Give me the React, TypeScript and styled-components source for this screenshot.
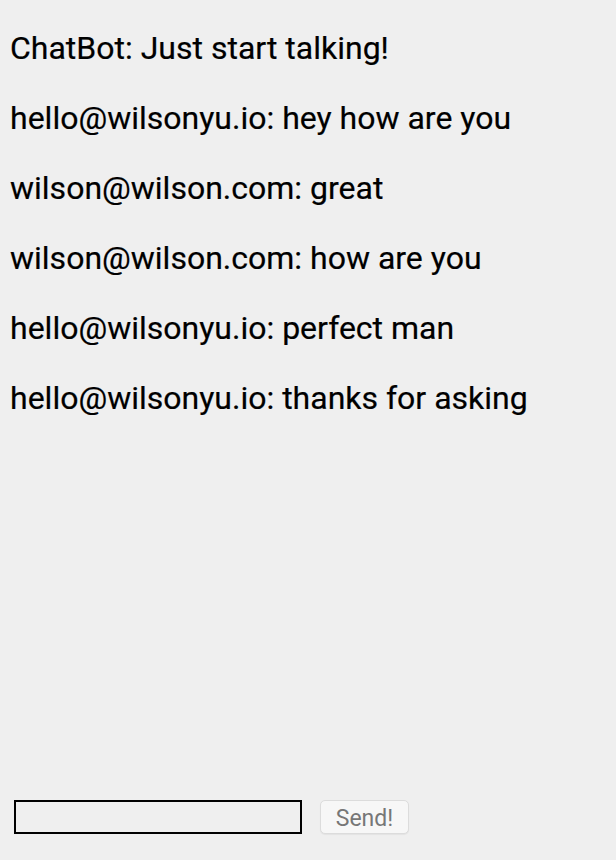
import React from "react";
import styled, { createGlobalStyle } from "styled-components";

const Global = createGlobalStyle`
  html, body { margin: 0; padding: 0; background: #efefef; }
  body { font-family: Roboto, "Helvetica Neue", Arial, sans-serif; color: #000; }
`;

const Page = styled.div`
  height: 860px;
  display: flex;
  flex-direction: column;
  box-sizing: border-box;
`;

const Messages = styled.div`
  flex: 1;
  display: flex;
  flex-direction: column;
  gap: 32px;
  padding: 29px 10px 0 10px;
`;

const Message = styled.p`
  margin: 0;
  font-size: 32px;
  line-height: 38px;
  white-space: nowrap;
  -webkit-text-stroke: 0.2px #000;
`;

const Form = styled.form`
  display: flex;
  align-items: center;
  gap: 18px;
  padding: 0 0 26px 14px;
`;

const Input = styled.input`
  box-sizing: border-box;
  width: 288px;
  height: 34px;
  border: 2px solid #000;
  background: transparent;
  margin: 0;
  padding: 0 4px;
  font-family: inherit;
  font-size: 16px;
  outline: none;
`;

const Button = styled.button`
  box-sizing: border-box;
  width: 89px;
  height: 34px;
  margin: 0;
  padding: 3px 0 0 0;
  border: 1px solid #dcdcdc;
  border-radius: 5px;
  background: #f7f7f7;
  color: #777;
  font-family: Roboto, "Helvetica Neue", Arial, sans-serif;
  font-size: 23px;
  line-height: 1;
  box-shadow: 0 1px 1px rgba(0, 0, 0, 0.05);
`;

const messages = [
  "ChatBot: Just start talking!",
  "hello@wilsonyu.io: hey how are you",
  "wilson@wilson.com: great",
  "wilson@wilson.com: how are you",
  "hello@wilsonyu.io: perfect man",
  "hello@wilsonyu.io: thanks for asking",
];

export default function App() {
  return (
    <>
      <Global />
      <Page>
        <Messages>
          {messages.map((m, i) => (
            <Message key={i}>{m}</Message>
          ))}
        </Messages>
        <Form onSubmit={(e) => e.preventDefault()}>
          <Input type="text" />
          <Button type="submit" disabled>
            Send!
          </Button>
        </Form>
      </Page>
    </>
  );
}
